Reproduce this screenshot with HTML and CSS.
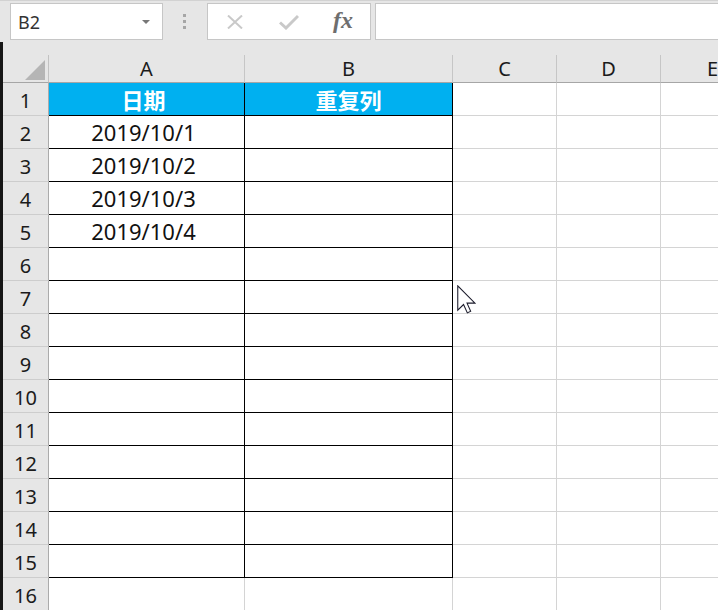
FILE: index.html
```html
<!DOCTYPE html>
<html lang="zh-CN">
<head>
  <meta charset="UTF-8" />
  <title>重复列 - 工作表</title>
  <link rel="stylesheet" href="styles.css">
</head>
<body>

  <!-- 编辑栏 -->
  <div class="toolbar">
    <div class="name-box">
      <span>B2</span>
      <span class="caret"></span>
    </div>
    <div class="grip"><i></i><i></i><i></i></div>
    <div class="fx-buttons">
      <span class="fx-btn">
        <svg width="18" height="14" viewBox="0 0 18 14"><path d="M2 0.5 L16 13.5 M16 0.5 L2 13.5" stroke="#c9c9c9" stroke-width="2" fill="none"/></svg>
      </span>
      <span class="fx-btn">
        <svg width="20" height="16" viewBox="0 0 20 16"><path d="M1 8.5 L7 14 L19 2" stroke="#c9c9c9" stroke-width="3" fill="none"/></svg>
      </span>
      <span class="fx-btn fx-label">fx</span>
    </div>
    <div class="formula-input"></div>
  </div>

  <!-- 工作表 -->
  <div class="sheet-wrap">
    <div class="sheet">
      <div class="corner"><span class="tri"></span></div>
      <div class="hd">A</div><div class="hd">B</div><div class="hd">C</div><div class="hd">D</div><div class="hd">E</div>

      <div class="rh">1</div><div class="c t a title">日期</div><div class="c t title">重复列</div><div class="c"></div><div class="c"></div><div class="c"></div>
      <div class="rh">2</div><div class="c t a">2019/10/1</div><div class="c t"></div><div class="c"></div><div class="c"></div><div class="c"></div>
      <div class="rh">3</div><div class="c t a">2019/10/2</div><div class="c t"></div><div class="c"></div><div class="c"></div><div class="c"></div>
      <div class="rh">4</div><div class="c t a">2019/10/3</div><div class="c t"></div><div class="c"></div><div class="c"></div><div class="c"></div>
      <div class="rh">5</div><div class="c t a">2019/10/4</div><div class="c t"></div><div class="c"></div><div class="c"></div><div class="c"></div>
      <div class="rh">6</div><div class="c t"></div><div class="c t"></div><div class="c"></div><div class="c"></div><div class="c"></div>
      <div class="rh">7</div><div class="c t"></div><div class="c t"></div><div class="c"></div><div class="c"></div><div class="c"></div>
      <div class="rh">8</div><div class="c t"></div><div class="c t"></div><div class="c"></div><div class="c"></div><div class="c"></div>
      <div class="rh">9</div><div class="c t"></div><div class="c t"></div><div class="c"></div><div class="c"></div><div class="c"></div>
      <div class="rh">10</div><div class="c t"></div><div class="c t"></div><div class="c"></div><div class="c"></div><div class="c"></div>
      <div class="rh">11</div><div class="c t"></div><div class="c t"></div><div class="c"></div><div class="c"></div><div class="c"></div>
      <div class="rh">12</div><div class="c t"></div><div class="c t"></div><div class="c"></div><div class="c"></div><div class="c"></div>
      <div class="rh">13</div><div class="c t"></div><div class="c t"></div><div class="c"></div><div class="c"></div><div class="c"></div>
      <div class="rh">14</div><div class="c t"></div><div class="c t"></div><div class="c"></div><div class="c"></div><div class="c"></div>
      <div class="rh">15</div><div class="c t"></div><div class="c t"></div><div class="c"></div><div class="c"></div><div class="c"></div>
      <div class="rh">16</div><div class="c"></div><div class="c"></div><div class="c"></div><div class="c"></div><div class="c"></div>
    </div>
  </div>

  <!-- 鼠标指针 -->
  <svg class="cursor" width="19" height="29" viewBox="0 0 12.5 19">
    <path d="M0.5 0.5 L0.5 16.5 L4.3 12.8 L6.8 18.3 L9 17.3 L6.6 11.9 L11.8 11.9 Z" fill="#fff" stroke="#1c1c2c" stroke-width="0.7" stroke-linejoin="miter"/>
  </svg>

</body>
</html>
```

FILE: styles.css
```css
body {
  margin: 0;
  background-color: #e6e6e6;
  font-family: "Noto Sans", "Noto Sans CJK SC", sans-serif;
  height: 610px;
  overflow: hidden;
}

/* 编辑栏 */
.toolbar {
  height: 42px;
  box-sizing: border-box;
  border-top: 1px solid #d2d2d2;
  padding: 2px 0 0 10px;
  display: flex;
  align-items: flex-start;
  overflow: hidden;
}
.name-box {
  width: 153px;
  height: 37px;
  box-sizing: border-box;
  background: #fff;
  border: 1px solid #c6c6c6;
  display: flex;
  align-items: center;
  justify-content: space-between;
  padding: 0 12px 0 7px;
  font-size: 18px;
  color: #333;
}
.caret {
  width: 0;
  height: 0;
  border-left: 4px solid transparent;
  border-right: 4px solid transparent;
  border-top: 4px solid #777;
}
.grip {
  width: 3px;
  height: 37px;
  margin: 0 21px 0 20px;
  display: flex;
  flex-direction: column;
  justify-content: center;
  gap: 3px;
}
.grip i {
  display: block;
  width: 3px;
  height: 3px;
  background: #a6a6a6;
}
.fx-buttons {
  width: 164px;
  height: 37px;
  box-sizing: border-box;
  background: #fff;
  border: 1px solid #c6c6c6;
  display: flex;
}
.fx-btn {
  width: 54px;
  display: flex;
  align-items: center;
  justify-content: center;
}
.fx-label {
  font-family: "Liberation Serif", serif;
  font-style: italic;
  font-weight: bold;
  font-size: 24px;
  color: #6e6e6e;
  padding-bottom: 3px;
}
.formula-input {
  flex: 1;
  height: 37px;
  box-sizing: border-box;
  background: #fff;
  border: 1px solid #c6c6c6;
  border-right: none;
  margin-left: 4px;
}

/* 工作表 */
.sheet-wrap {
  border-left: 3px solid #161616;
  padding-top: 13px;
  overflow: hidden;
}
.sheet {
  display: grid;
  grid-template-columns: 46px 196px 208px 104px 104px 104px;
  grid-template-rows: 28px;
  grid-auto-rows: 33px;
}
.sheet > div {
  box-sizing: border-box;
  display: flex;
  align-items: center;
  justify-content: center;
}
.corner {
  background: #e6e6e6;
  border-right: 1px solid #c2c2c2;
  border-bottom: 1px solid #a6a6a6;
  justify-content: flex-end !important;
  align-items: flex-end !important;
  padding: 0 3px 2px 0;
}
.tri {
  width: 20px;
  height: 20px;
  background: #b5b5b5;
  clip-path: polygon(100% 0, 100% 100%, 0 100%);
}
.hd {
  background: #e6e6e6;
  border-right: 1px solid #c6c6c6;
  border-bottom: 1px solid #a6a6a6;
  font-size: 20px;
  color: #1b1b1b;
}
.rh {
  background: #e6e6e6;
  border-right: 1px solid #ababab;
  border-bottom: 1px solid #cdcdcd;
  font-size: 20px;
  color: #1b1b1b;
  padding-top: 3px;
}
.c {
  background: #fff;
  border-right: 1px solid #d4d4d4;
  border-bottom: 1px solid #d4d4d4;
  font-size: 22px;
  color: #111;
}
.c.t {
  border-right-color: #000;
  border-bottom-color: #000;
}
.c.a {
  padding-right: 6px;
}
.c.title {
  background: #00b0f0;
  color: #fff;
  font-weight: bold;
}

.cursor {
  position: absolute;
  left: 457px;
  top: 285px;
}
```
